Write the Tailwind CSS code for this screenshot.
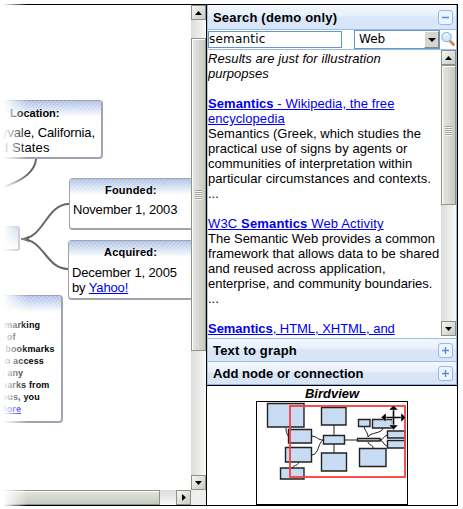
<!DOCTYPE html>
<html lang="en">
<head>
<meta charset="utf-8">
<title>Graph editor</title>
<script src="https://cdn.jsdelivr.net/npm/@tailwindcss/browser@4"></script>
</head>
<body class="bg-white w-[463px] h-[509px] overflow-hidden font-['Liberation_Sans',Arial,sans-serif] text-[13px] leading-[15px] text-black">
<div class="relative w-[463px] h-[509px] pt-1 overflow-hidden">
  <div class="w-[458px] h-[502px] flex border-y border-r border-black">

    <!-- Graph canvas with scrollbars -->
    <section class="w-[206px] h-[500px] flex flex-col">
      <div class="flex h-[485px]">
        <div class="relative w-[191px] h-[485px] overflow-hidden">
          <svg class="absolute left-0 top-0" width="191" height="485" fill="none" stroke="#666" stroke-width="2">
            <path d="M36 154C35 168 20 177 0 183"/>
            <path d="M21 234C44 234 46 199 69 199M21 234C44 234 46 264 68 264"/>
            <path d="M21 234L29 231V237Z" fill="#666" stroke="none"/>
          </svg>
          <div class="absolute left-[-20px] top-[95px] w-[123px] h-[59px] rounded-[4px] border-[1.5px] border-b-2 border-r-2 border-[#a3a3b0] bg-white overflow-hidden">
            <div class="h-4 bg-[repeating-linear-gradient(135deg,#fff0_0_1.4px,#ffffff40_1.4px_2.8px),linear-gradient(#a9bfe5,#ffffff)]"></div>
            <div class="absolute left-[29px] top-[5px] text-[11px] font-bold whitespace-nowrap">Location:</div>
            <div class="absolute left-[20px] top-[24px] whitespace-nowrap tracking-[-0.12px]">yvale, California,</div>
            <div class="absolute left-[20px] top-[39px] whitespace-nowrap tracking-[0.1px]">d States</div>
          </div>
          <div class="absolute left-[69px] top-[173px] w-[130px] h-[52px] rounded-[4px] border-[1.5px] border-b-2 border-[#a3a3b0] bg-white overflow-hidden">
            <div class="h-4 bg-[repeating-linear-gradient(135deg,#fff0_0_1.4px,#ffffff40_1.4px_2.8px),linear-gradient(#a9bfe5,#ffffff)]"></div>
            <div class="absolute left-[35px] top-[4px] text-[11px] font-bold whitespace-nowrap tracking-[0.2px]">Founded:</div>
            <div class="absolute left-[3px] top-[23px] whitespace-nowrap tracking-[-0.17px]">November 1, 2003</div>
          </div>
          <div class="absolute left-[68px] top-[235px] w-[130px] h-[60px] rounded-[4px] border-[1.5px] border-b-2 border-[#a3a3b0] bg-white overflow-hidden">
            <div class="h-4 bg-[repeating-linear-gradient(135deg,#fff0_0_1.4px,#ffffff40_1.4px_2.8px),linear-gradient(#a9bfe5,#ffffff)]"></div>
            <div class="absolute left-[35px] top-[4px] text-[11px] font-bold whitespace-nowrap tracking-[0.2px]">Acquired:</div>
            <div class="absolute left-[3px] top-[24px] whitespace-nowrap tracking-[-0.13px]">December 1, 2005<br>by <a class="text-[#0000ee] underline">Yahoo!</a></div>
          </div>
          <div class="absolute left-[-20px] top-[221px] w-[40px] h-[25px] rounded-[3px] border-2 border-[#b4b6c4] bg-linear-to-b from-[#b9c9e6] to-white"></div>
          <div class="absolute left-[-20px] top-[290px] w-[83px] h-[128px] rounded-[4px] border-[1.5px] border-b-2 border-r-2 border-[#a3a3b0] bg-white overflow-hidden">
            <div class="h-4 bg-[repeating-linear-gradient(135deg,#fff0_0_1.4px,#ffffff40_1.4px_2.8px),linear-gradient(#a9bfe5,#ffffff)]"></div>
            <div class="absolute left-[18px] top-[23px] text-[9px] leading-[12px] font-bold whitespace-nowrap tracking-[0.15px]">kmarking<br>e of<br>r bookmarks<br>&nbsp;to access<br>n any<br>marks from<br>ious, you<br><a class="text-[#0000ee] underline">More</a></div>
          </div>
        </div>
        <!-- vertical scrollbar -->
        <div class="w-[15px] h-[485px] flex flex-col bg-linear-to-r from-[#dcdcda] to-[#f8f8f6]">
          <div class="h-[15px] flex items-center justify-center border border-[#8e9189] bg-linear-to-br from-[#f5f6f3] to-[#c8cbc4]"><svg width="7" height="4"><path d="M3.500 0L7 4H0Z"/></svg></div>
          <div class="h-[18px]"></div>
          <div class="h-[313px] flex items-center justify-center border border-[#8e9681] bg-linear-to-r from-[#e6e9e2] to-[#c6cbc2] shadow-[inset_1px_1px_#fff]"><div class="w-[7px] h-[10px] bg-[repeating-linear-gradient(#9fa39b_0_1px,#f5f5f2_1px_2px)]"></div></div>
          <div class="grow"></div>
          <div class="h-[15px] flex items-center justify-center border border-[#8e9189] bg-linear-to-br from-[#f5f6f3] to-[#c8cbc4]"><svg width="7" height="4"><path d="M0 0H7L3.500 4Z"/></svg></div>
        </div>
      </div>
      <!-- horizontal scrollbar -->
      <div class="flex h-[15px] bg-linear-to-b from-[#dcdcda] to-[#f8f8f6]">
        <div class="w-[160px] border border-[#8e9681] border-l-0 bg-linear-to-b from-[#e2e5de] to-[#c6cbc2] shadow-[inset_0_1px_#fff]"></div>
        <div class="w-[16px]"></div>
        <div class="w-[15px] flex items-center justify-center border border-[#8e9189] bg-linear-to-br from-[#f5f6f3] to-[#c8cbc4]"><svg width="4" height="7"><path d="M0 0L4 3.500L0 7Z"/></svg></div>
        <div class="w-[15px] bg-[#eeeeec]"></div>
      </div>
    </section>

    <!-- Side panel -->
    <aside class="w-[251px] h-[500px] border-l border-black flex flex-col">
      <div class="h-[381px] border-b border-black flex flex-col">
        <div class="h-[380px] flex flex-col border-x border-b border-[#8db2e3] border-l-[#a9c4ee] pl-0">
          <header class="h-[25px] flex items-center justify-between pl-[5px] pr-[3px] border-b border-[#99bbe8] bg-[linear-gradient(#f4f8fd,#e6effa_45%,#d9e6f7_50%,#d8e5f7)]">
            <b class="text-[13px] tracking-[0.2px] whitespace-nowrap pt-px">Search (demo only)</b>
            <svg width="15" height="15" fill="none"><rect x=".5" y=".5" width="14" height="14" rx="2.500" fill="#eef4fd" stroke="#94b9ee"/><path d="M4 7.500H11" stroke="#5b8cc8" stroke-width="1.500"/></svg>
          </header>
          <div class="h-[20px] flex items-center border-b border-[#99bbe8] font-['DejaVu_Sans',sans-serif] text-[12px]">
            <div class="w-[134px] h-[17px] border border-[#6497cb] leading-[15px] tracking-[0.2px]">semantic</div>
            <div class="ml-[12px] w-[86px] h-[19px] flex border border-[#6497cb]">
              <span class="w-[69px] pl-[4px] leading-[17px]">Web</span>
              <span class="w-[15px] h-[17px] flex items-center justify-center bg-[#d8d6d0] border border-[#888] border-t-white border-l-white"><svg width="8" height="4"><path d="M0 0H8L4 4Z"/></svg></span>
            </div>
            <svg class="ml-px mb-px" width="15" height="16" fill="none"><path d="M9 10L12.500 13.500" stroke="#c88d55" stroke-width="3" stroke-linecap="round"/><circle cx="5.500" cy="6" r="4.700" fill="#d5e9fb" stroke="#9dbbdc" stroke-width="1.300"/><path d="M3 5C4 3 6 3 7 3.500" stroke="#fff"/></svg>
          </div>
          <div class="h-[289px] flex border-b border-[#99bbe8] overflow-hidden">
            <div class="w-[233px] shrink-0 whitespace-nowrap pt-[1px]">
              <div class="italic tracking-[0.07px]">Results are just for illustration</div>
              <div class="italic">purpopses</div>
              <div class="h-[15px]"></div>
              <a class="block text-[#0000ee] underline tracking-[0.07px]"><b>Semantics</b> - Wikipedia, the free<br>encyclopedia</a>
              <div class="tracking-[0.06px]">Semantics (Greek, which studies the</div>
              <div class="tracking-[0.08px]">practical use of signs by agents or</div>
              <div class="tracking-[0.01px]">communities of interpretation within</div>
              <div class="tracking-[0.05px]">particular circumstances and contexts.</div>
              <div>...</div>
              <div class="h-[15px]"></div>
              <a class="block text-[#0000ee] underline tracking-[0.15px]">W3C <b>Semantics</b> Web Activity</a>
              <div class="tracking-[-0.01px]">The Semantic Web provides a common</div>
              <div class="tracking-[0.02px]">framework that allows data to be shared</div>
              <div class="tracking-[0.04px]">and reused across application,</div>
              <div class="tracking-[-0.01px]">enterprise, and community boundaries.</div>
              <div>...</div>
              <div class="h-[15px]"></div>
              <a class="block text-[#0000ee] underline tracking-[-0.04px]"><b>Semantics</b>, HTML, XHTML, and</a>
            </div>
            <div class="w-[15px] h-[286px] shrink-0 flex flex-col bg-linear-to-r from-[#dcdcda] to-[#f8f8f6]">
              <div class="h-[15px] flex items-center justify-center border border-[#8e9189] bg-linear-to-br from-[#f5f6f3] to-[#c8cbc4]"><svg width="7" height="4"><path d="M3.500 0L7 4H0Z"/></svg></div>
              <div class="h-[140px] flex items-center justify-center border border-[#8e9681] bg-linear-to-r from-[#e6e9e2] to-[#c6cbc2] shadow-[inset_1px_1px_#fff]"><div class="w-[7px] h-[10px] mt-[-8px] bg-[repeating-linear-gradient(#9fa39b_0_1px,#f5f5f2_1px_2px)]"></div></div>
              <div class="grow"></div>
              <div class="h-[15px] flex items-center justify-center border border-[#8e9189] bg-linear-to-br from-[#f5f6f3] to-[#c8cbc4]"><svg width="7" height="4"><path d="M0 0H7L3.500 4Z"/></svg></div>
            </div>
          </div>
          <header class="h-[23px] flex items-center justify-between pl-[5px] pr-[3px] border-b border-[#99bbe8] bg-[linear-gradient(#f4f8fd,#e6effa_45%,#d9e6f7_50%,#d8e5f7)]">
            <b class="tracking-[0.2px] whitespace-nowrap pt-px">Text to graph</b>
            <svg width="15" height="15" fill="none"><rect x=".5" y=".5" width="14" height="14" rx="2.500" fill="#eef4fd" stroke="#94b9ee"/><path d="M4 7.500H11M7.500 4V11" stroke="#5b8cc8" stroke-width="1.300"/></svg>
          </header>
          <header class="h-[22px] flex items-center justify-between pl-[5px] pr-[3px] bg-[linear-gradient(#f4f8fd,#e6effa_45%,#d9e6f7_50%,#d8e5f7)]">
            <b class="tracking-[0.05px] whitespace-nowrap pt-px">Add node or connection</b>
            <svg width="15" height="15" fill="none"><rect x=".5" y=".5" width="14" height="14" rx="2.500" fill="#eef4fd" stroke="#94b9ee"/><path d="M4 7.500H11M7.500 4V11" stroke="#5b8cc8" stroke-width="1.300"/></svg>
          </header>
        </div>
      </div>
      <div class="flex flex-col items-center">
        <div class="h-[15px] font-bold italic">Birdview</div>
        <svg width="152" height="104" fill="none" stroke="#1c1c1c">
          <rect x=".5" y=".5" width="151" height="103" fill="#fff" stroke="#000"/>
          <path d="M30 27C30 32 31 33 33 36M56 35C62 36 62 39 67 39M56 54C63 53 62 42 67 39M43 61C41 66 38 63 36 67M78 24V35M78 43V52M89 39H101M108 25C109 31 112 31 112 36M127 27C126 33 114 31 112 36M112 41C113 45 117 43 117 47M124 39C128 38 128 35 131 34M124 39C128 40 127 44 131 45"/>
          <g fill="#c7dcf2" stroke="#222" stroke-width="1.400">
            <path d="M11.500 2.500h36.500v23.500h-36.500zM32.500 28.500h23v13.500h-23zM29.500 46.500h26v14.500h-26zM24.500 67h23.500v11h-23.500zM65.500 6.500h24.500v17.500h-24.500zM67.500 34.500h21v8.500h-21zM65.500 52h25v18h-25zM102.500 18.500h11.500v7h-11.500zM116.500 18.500h20v8.500h-20zM131.500 30h17.500v7h-17.500zM131.500 39.500h17.500v7.500h-17.500zM103.500 47.500h26.500v18h-26.500zM101.500 37.500h22.500v2.500h-22.500z"/>
          </g>
          <rect x="34" y="5" width="115" height="71" stroke="#fa3c3c" stroke-width="1.800"/>
          <g stroke="#fff" stroke-width="3"><path d="M126 16.500H149M137.500 6V28"/></g>
          <path d="M129 16.500H146M137.500 8V25" stroke="#000" stroke-width="1.600"/>
          <path d="M137.500 4L142 9H133ZM137.500 29L142 24H133ZM125 16.500L130 12V21ZM150 16.500L145 12V21Z" fill="#000" stroke="#fff" stroke-width=".4"/>
        </svg>
      </div>
    </aside>
  </div>
  <!-- left-edge fade -->
  <div class="absolute left-0 top-0 w-[28px] h-[509px] bg-linear-to-r from-white from-10% to-transparent"></div>
</div>
</body>
</html>
